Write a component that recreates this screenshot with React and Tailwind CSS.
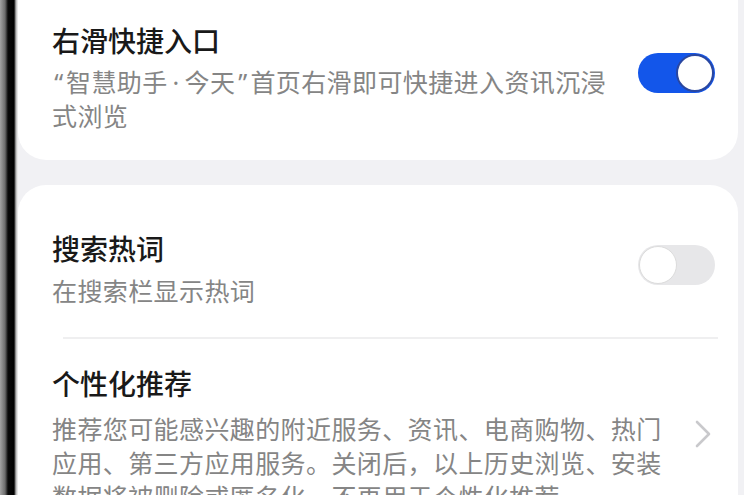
import React from 'react';

const font = { fontFamily: '"Noto Sans CJK SC", "Noto Sans", sans-serif' };

const Toggle = ({ on, className = '' }) => (
  <div
    className={`flex h-[40px] w-[77px] shrink-0 items-center rounded-full p-[1px] ${
      on ? 'justify-end bg-[#1356ea]' : 'justify-start bg-[#e7e7e9]'
    } ${className}`}
  >
    <div
      className={`h-[38px] w-[38px] rounded-full bg-white ${
        on ? 'border-2 border-[#2a47a0]' : 'border border-[#dcdcdc]'
      }`}
    />
  </div>
);

const Chevron = ({ className = '' }) => (
  <svg className={className} width="18" height="30" viewBox="0 0 18 30" fill="none">
    <path d="M3 3l12 12-12 12" stroke="#c9c9cc" strokeWidth="2.6" strokeLinecap="round" strokeLinejoin="round" />
  </svg>
);

// narrow punctuation, drawn with a latin face
const Narrow = ({ children, w }) => (
  <span className={`inline-block text-center font-['Noto_Sans'] ${w}`}>{children}</span>
);

export default function App() {
  return (
    <div className="flex h-[495px] w-[744px] overflow-hidden bg-[#f1f1f4]" style={font}>
      {/* phone bezel */}
      <div className="h-full w-[18px] shrink-0 bg-[linear-gradient(to_right,#a4a4a4_0px,#6d6d6d_5px,#0a0a0a_8px,#000_14px,#b5b5b5_16px,#f6f6f7_18px)]" />

      <div className="flex flex-1 flex-col gap-[25px] pr-[6px]">
        {/* card 1 */}
        <div className="-mt-[30px] flex shrink-0 items-start justify-between rounded-[28px] bg-white pb-[28px] pl-[34px] pr-[23px] pt-[52px]">
          <div className="flex flex-col">
            <div className="text-[28px] font-medium leading-[36px] text-[#191919]">右滑快捷入口</div>
            <div className="mt-[7px] text-[25px] leading-[33px] tracking-[0.4px] text-[#858585]">
              <div>
                <Narrow w="w-[14px]">“</Narrow>智慧助手<Narrow w="w-[17px]">·</Narrow>今天<Narrow w="w-[15px]">”</Narrow>首页右滑即可快捷进入资讯沉浸
              </div>
              <div>式浏览</div>
            </div>
          </div>
          <Toggle on className="mt-[31px]" />
        </div>

        {/* card 2 */}
        <div className="flex flex-1 flex-col rounded-t-[28px] bg-white pt-[45px]">
          <div className="flex items-start justify-between pl-[34px] pr-[23px] pb-[30px]">
            <div className="flex flex-col">
              <div className="text-[28px] font-medium leading-[36px] text-[#191919]">搜索热词</div>
              <div className="mt-[8px] text-[25px] leading-[33px] tracking-[0.4px] text-[#858585]">在搜索栏显示热词</div>
            </div>
            <Toggle on={false} className="mt-[15px]" />
          </div>

          <div className="ml-[45px] mr-[20px] h-[1.5px] bg-[#efeff0]" />

          <div className="flex items-start justify-between pl-[34px] pr-[26px] pt-[26px]">
            <div className="flex flex-col">
              <div className="text-[28px] font-medium leading-[36px] text-[#191919]">个性化推荐</div>
              <div className="mt-[10px] text-[25px] leading-[34px] tracking-[0.4px] text-[#858585]">
                <div>推荐您可能感兴趣的附近服务、资讯、电商购物、热门</div>
                <div>应用、第三方应用服务。关闭后，以上历史浏览、安装</div>
                <div>数据将被删除或匿名化，不再用于个性化推荐</div>
              </div>
            </div>
            <Chevron className="mt-[54px] shrink-0" />
          </div>
        </div>
      </div>
    </div>
  );
}
